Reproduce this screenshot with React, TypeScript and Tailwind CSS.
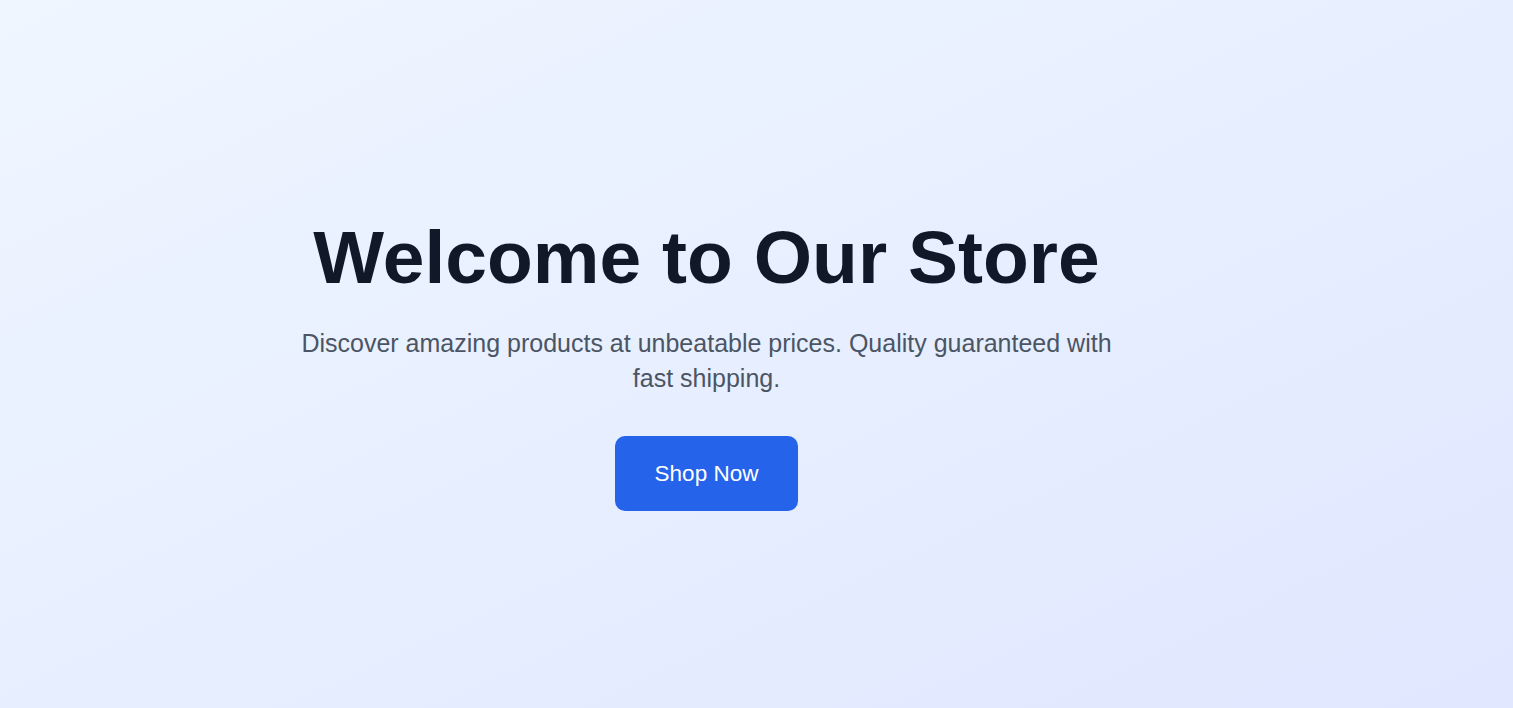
import React from "react";

export default function App() {
  return (
    <section
      className="min-h-screen w-full bg-gradient-to-br from-[#eff6ff] to-[#e0e7ff] flex items-center justify-center pt-[22px] pr-[100px]"
      style={{ fontFamily: '"Liberation Sans", Arial, sans-serif' }}
    >
      <div className="flex flex-col items-center text-center">
        {/* Hero heading */}
        <h1 className="text-[75px] leading-none font-bold text-[#111827] mb-[31px]">
          Welcome to Our Store
        </h1>
        <p className="text-[25px] leading-[35px] text-[#4b5563] max-w-[840px] mb-10">
          Discover amazing products at unbeatable prices. Quality guaranteed with fast shipping.
        </p>
        <button className="bg-[#2563eb] hover:bg-[#1d4ed8] text-white text-[22.5px] leading-[29px] px-10 py-[23px] rounded-[10px] transition-colors">
          Shop Now
        </button>
      </div>
    </section>
  );
}
